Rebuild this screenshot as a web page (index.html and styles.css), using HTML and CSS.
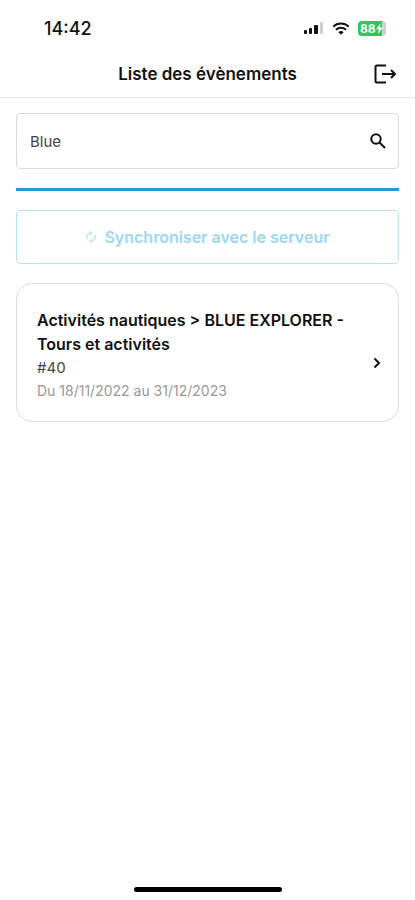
FILE: index.html
```html
<!DOCTYPE html>
<html lang="fr">

<head>
  <meta charset="UTF-8">
  <meta name="viewport" content="width=device-width, initial-scale=1.0">
  <title>Liste des évènements</title>
  <link rel="stylesheet" href="styles.css">
</head>

<body>
  <div class="status-bar">
    <time class="clock">14:42</time>
    <div class="status-icons">
      <svg class="signal" width="20" height="12" viewBox="0 0 20 12">
        <rect x="0" y="8" width="3" height="4" rx="1" />
        <rect x="5" y="6" width="3" height="6" rx="1" />
        <rect x="10" y="3" width="4" height="9" rx="1" />
        <rect class="weak" x="16" y="0" width="3" height="12" rx="1" />
      </svg>
      <svg class="wifi" width="18" height="13" viewBox="0 0 18 13">
        <path d="M1.2 4.6a11.2 11.2 0 0 1 15.6 0M4 7.7a7.2 7.2 0 0 1 10 0" />
        <path class="dot" d="M9 12.8l-2.6-2.6a3.8 3.8 0 0 1 5.2 0z" />
      </svg>
      <div class="battery">
        <span>88</span>
        <svg width="7" height="11" viewBox="0 0 7 11">
          <path d="M4.8 0L0 6.2h2.9L1.8 11L7 4.6H3.9z" />
        </svg>
      </div>
    </div>
  </div>

  <header class="header">
    <h1>Liste des évènements</h1>
    <button class="logout" type="button" aria-label="Se déconnecter">
      <svg width="24" height="22" viewBox="0 0 24 22">
        <path d="M13 2.500H4Q2.500 2.500 2.500 4V18Q2.500 19.500 4 19.500H13" />
        <path d="M9 11H22M18 7l4 4-4 4" />
      </svg>
    </button>
  </header>

  <main>
    <form class="search">
      <input type="text" name="q" value="Blue" aria-label="Rechercher">
      <button type="submit" aria-label="Lancer la recherche">
        <svg width="16" height="16" viewBox="0 0 16 16">
          <circle cx="6" cy="6" r="4.700" />
          <path d="M9.500 9.500L15 15" />
        </svg>
      </button>
    </form>

    <div class="progress"></div>

    <button class="sync" type="button" disabled>
      <svg width="12" height="12" viewBox="0 0 12 12">
        <path d="M2.200 8.200A4.300 4.300 0 0 1 5.500 2h1.200M5.200.5L6.800 2 5.200 3.500M9.800 3.800A4.300 4.300 0 0 1 6.500 10H5.300M6.800 8.500L5.200 10l1.600 1.500" />
      </svg>
      Synchroniser avec le serveur
    </button>

    <a class="event" href="#40">
      <div class="event-text">
        <h2>Activités nautiques &gt; BLUE EXPLORER - Tours et activités</h2>
        <p>#40</p>
        <p class="dates">Du 18/11/2022 au 31/12/2023</p>
      </div>
      <svg class="chevron" width="8" height="12" viewBox="0 0 8 12">
        <path d="M1.500 1.500L6 6l-4.500 4.500" />
      </svg>
    </a>
  </main>

  <div class="home-indicator"></div>
</body>

</html>
```

FILE: styles.css
```css
* {
  box-sizing: border-box;
}

body {
  margin: 0;
  min-height: 100vh;
  display: flex;
  flex-direction: column;
  background: #fff;
  color: #111;
  font-family: Inter, "Liberation Sans", sans-serif;
}

h1,
h2,
p {
  margin: 0;
}

button {
  font-family: inherit;
  color: inherit;
  background: none;
  border: 0;
  padding: 0;
}

svg {
  display: block;
  flex: none;
  fill: none;
  stroke: currentColor;
}

/* status bar */
.status-bar {
  display: flex;
  align-items: center;
  justify-content: space-between;
  height: 50px;
  padding: 6px 29px 0 44px;
}

.clock {
  font-size: 18px;
  font-weight: 500;
}

.status-icons {
  display: flex;
  align-items: center;
  gap: 8px;
}

.signal,
.battery svg {
  fill: currentColor;
  stroke: none;
}

.signal .weak {
  fill: #d0d0d0;
}

.wifi {
  stroke-width: 2;
}

.wifi .dot {
  fill: currentColor;
  stroke: none;
}

.battery {
  display: flex;
  align-items: center;
  height: 15px;
  width: 28px;
  padding-left: 2px;
  border-radius: 4px;
  background: linear-gradient(to right, #2fc759 24px, #c4d8c8 24px);
  color: #fff;
  font-size: 12px;
  font-weight: 700;
}

/* header */
.header {
  display: grid;
  grid-template-columns: 24px 1fr 24px;
  align-items: center;
  height: 48px;
  padding: 0 18px;
  border-bottom: 1px solid #e4e4e4;
}

.header h1 {
  grid-column: 2;
  text-align: center;
  font-size: 17px;
  font-weight: 600;
}

.logout svg {
  stroke-width: 2;
}

/* content */
main {
  flex: 1;
  padding: 15px 16px;
}

.search {
  display: flex;
  align-items: center;
  height: 56px;
  padding: 0 12px 0 13px;
  border: 1px solid #dcdcdc;
  border-radius: 4px;
}

.search input {
  flex: 1;
  min-width: 0;
  padding: 0;
  border: 0;
  outline: 0;
  background: none;
  color: #444;
  font-family: inherit;
  font-size: 15px;
}

.search svg {
  stroke-width: 2;
}

.progress {
  height: 3px;
  margin: 19px 0;
  background: #2398dc;
}

.sync {
  display: flex;
  align-items: center;
  justify-content: center;
  gap: 7px;
  width: 100%;
  height: 54px;
  border: 1px solid #b9e2f8;
  border-radius: 4px;
  color: #9ad7f5;
  font-size: 16px;
  font-weight: 600;
}

.event {
  display: flex;
  align-items: center;
  gap: 16px;
  margin-top: 19px;
  padding: 24px 17px 19px 20px;
  border: 1px solid #dedede;
  border-radius: 16px;
  color: inherit;
  text-decoration: none;
}

.event-text {
  flex: 1;
  font-size: 15px;
  line-height: 24px;
  color: #444;
}

.event h2 {
  color: #111;
  font-size: 16px;
  font-weight: 600;
}

.event .dates {
  color: #999;
  font-size: 14px;
  line-height: 22px;
}

.chevron {
  margin-top: 16px;
  stroke-width: 2;
}

.home-indicator {
  width: 148px;
  height: 5px;
  margin: 0 auto 8px;
  border-radius: 3px;
  background: #000;
}
```
